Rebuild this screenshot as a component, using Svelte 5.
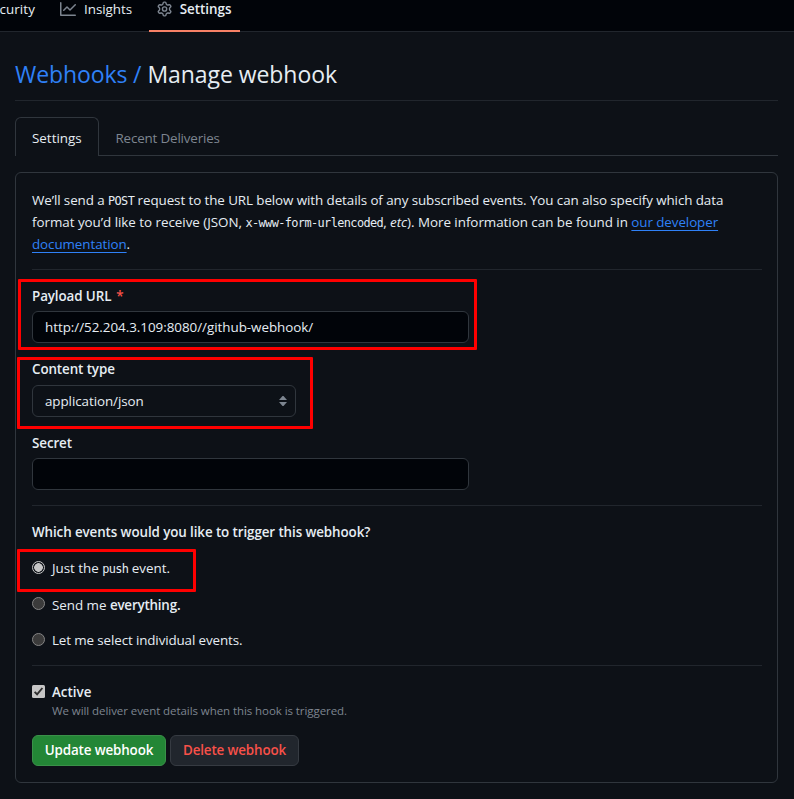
<script>
  const tabs = [
    { label: 'Settings', active: true },
    { label: 'Recent Deliveries', active: false }
  ];
  let selected = $state('push');
  let url = $state('http://52.204.3.109:8080//github-webhook/');
</script>

<div class="page">
  <nav class="repo-nav">
    <span class="nav-item security">Security</span>
    <span class="nav-item insights">
      <svg width="16" height="16" viewBox="0 0 16 16" fill="#7d8590"><path d="M1.5 1.75V13.5h13.75a.75.75 0 0 1 0 1.5H.75a.75.75 0 0 1-.75-.75V1.75a.75.75 0 0 1 1.5 0Zm14.28 2.53-5.25 5.25a.75.75 0 0 1-1.06 0L7 7.06 4.28 9.78a.751.751 0 0 1-1.042-.018.751.751 0 0 1-.018-1.042l3.25-3.25a.75.75 0 0 1 1.06 0L10 7.94l4.72-4.72a.751.751 0 0 1 1.042.018.751.751 0 0 1 .018 1.042Z"/></svg>
      <span class="w-insights">Insights</span>
    </span>
    <span class="nav-item current">
      <svg width="16" height="16" viewBox="0 0 16 16" fill="#7d8590"><path d="M8 0a8.2 8.2 0 0 1 .701.031C9.444.095 9.99.645 10.16 1.29l.288 1.107c.018.066.079.158.212.224.231.114.454.243.668.386.123.082.233.09.299.071l1.103-.303c.644-.176 1.392.021 1.82.63.27.385.506.792.704 1.218.315.675.111 1.422-.364 1.891l-.814.806c-.049.048-.098.147-.088.294.016.257.016.515 0 .772-.01.147.038.246.088.294l.814.806c.475.469.679 1.216.364 1.891a7.977 7.977 0 0 1-.704 1.217c-.428.61-1.176.807-1.82.63l-1.102-.302c-.067-.019-.177-.011-.3.071a5.909 5.909 0 0 1-.668.386c-.133.066-.194.158-.211.224l-.29 1.106c-.168.646-.715 1.196-1.458 1.26a8.006 8.006 0 0 1-1.402 0c-.743-.064-1.289-.614-1.458-1.26l-.289-1.106c-.018-.066-.079-.158-.212-.224a5.738 5.738 0 0 1-.668-.386c-.123-.082-.233-.09-.299-.071l-1.103.303c-.644.176-1.392-.021-1.82-.63a8.12 8.12 0 0 1-.704-1.218c-.315-.675-.111-1.422.363-1.891l.815-.806c.05-.048.098-.147.088-.294a6.214 6.214 0 0 1 0-.772c.01-.147-.038-.246-.088-.294l-.815-.806C.635 6.045.431 5.298.746 4.623a7.92 7.92 0 0 1 .704-1.217c.428-.61 1.176-.807 1.82-.63l1.102.302c.067.019.177.011.3-.071.214-.143.437-.272.668-.386.133-.066.194-.158.211-.224l.29-1.106C6.009.645 6.556.095 7.299.03 7.53.01 7.764 0 8 0Zm-.571 1.525c-.036.003-.108.036-.137.146l-.289 1.105c-.147.561-.549.967-.998 1.189-.173.086-.34.183-.5.29-.417.278-.97.423-1.529.27l-1.103-.303c-.109-.03-.175.016-.195.045-.22.312-.412.644-.573.99-.014.031-.021.11.059.19l.815.806c.411.406.562.957.53 1.456a4.709 4.709 0 0 0 0 .582c.032.499-.119 1.05-.53 1.456l-.815.806c-.081.08-.073.159-.059.19.162.346.353.677.573.989.02.03.085.076.195.046l1.102-.303c.56-.153 1.113-.008 1.53.27.161.107.328.204.501.29.447.222.85.629.997 1.189l.289 1.105c.029.109.101.143.137.146a6.6 6.6 0 0 0 1.142 0c.036-.003.108-.036.137-.146l.289-1.105c.147-.561.549-.967.998-1.189.173-.086.34-.183.5-.29.417-.278.97-.423 1.529-.27l1.103.303c.109.029.175-.016.195-.045.22-.313.411-.644.573-.99.014-.031.021-.11-.059-.19l-.815-.806c-.411-.406-.562-.957-.53-1.456a4.709 4.709 0 0 0 0-.582c-.032-.499.119-1.05.53-1.456l.815-.806c.081-.08.073-.159.059-.19a6.464 6.464 0 0 0-.573-.989c-.02-.03-.085-.076-.195-.046l-1.102.303c-.56.153-1.113.008-1.53-.27a4.44 4.44 0 0 0-.501-.29c-.447-.222-.85-.629-.997-1.189l-.289-1.105c-.029-.11-.101-.143-.137-.146a6.6 6.6 0 0 0-1.142 0ZM11 8a3 3 0 1 1-6 0 3 3 0 0 1 6 0ZM9.5 8a1.5 1.5 0 1 0-3.001.001A1.5 1.5 0 0 0 9.5 8Z"/></svg>
      <b class="w-settings">Settings</b>
    </span>
  </nav>

  <main>
    <h1><a href="#hooks">Webhooks /</a> <span class="manage">Manage webhook</span></h1>

    <div class="tabs">
      {#each tabs as tab}
        <span class="tab" class:active={tab.active}>{tab.label}</span>
      {/each}
    </div>

    <section class="panel">
      <p class="intro">
        <span class="line l1">We’ll send a <code>POST</code> request to the URL below with details of any subscribed events. You can also specify which data</span>
        <span class="line l2">format you’d like to receive (JSON, <code>x-www-form-urlencoded</code>, <em>etc</em>). More information can be found in <a href="#docs">our developer</a></span>
        <span class="line l3"><a href="#docs">documentation</a>.</span>
      </p>
      <hr />

      <div class="field payload">
        <i class="mark"></i>
        <label for="url"><span>Payload URL</span><span class="star">*</span></label>
        <input id="url" class="text url" bind:value={url} />
      </div>
      <div class="field ctype">
        <i class="mark"></i>
        <span class="label">Content type</span>
        <div class="select">
          <span>application/json</span>
          <svg width="8" height="10" viewBox="0 0 8 10" fill="#7d8590"><path d="M0 4h8L4.5 0h-1zM0 6h8L4.5 10h-1z"/></svg>
        </div>
      </div>
      <div class="field secret">
        <label for="secret">Secret</label>
        <input id="secret" class="text" />
      </div>
      <hr />

      <div class="question"><b>Which events would you like to trigger this webhook?</b></div>
      <div class="choice push">
        <i class="mark"></i>
        <button class="radio" class:on={selected === 'push'} aria-label="push" onclick={() => (selected = 'push')}></button>
        <span>Just the <code>push</code> event.</span>
      </div>
      <div class="choice all">
        <button class="radio" class:on={selected === 'all'} aria-label="everything" onclick={() => (selected = 'all')}></button>
        <span>Send me <b>everything.</b></span>
      </div>
      <div class="choice some">
        <button class="radio" class:on={selected === 'some'} aria-label="individual" onclick={() => (selected = 'some')}></button>
        <span>Let me select individual events.</span>
      </div>
      <hr />

      <div class="active-row">
        <svg width="13" height="13" viewBox="0 0 13 13"><rect width="13" height="13" rx="1.5" fill="#c6c6c6" /><path d="M2.6 6.9 5.1 9.3 10.4 3" fill="none" stroke="#2f2f2f" stroke-width="1.9" /></svg>
        <b>Active</b>
      </div>
      <div class="note"><span>We will deliver event details when this hook is triggered.</span></div>
      <div class="actions">
        <button class="btn primary"><span>Update webhook</span></button>
        <button class="btn danger"><span>Delete webhook</span></button>
      </div>
    </section>
  </main>
</div>

<style>
  :global(body) { margin: 0; background: #0d1117; }
  * { box-sizing: border-box; }
  .page {
    width: 794px; height: 799px; overflow: hidden;
    background: #0d1117; color: #e6edf3;
    font: 13.4px/22px "Open Sans", "Noto Sans", sans-serif;
    letter-spacing: -0.03px;
  }
  b, label, .label { font-weight: 600; letter-spacing: -0.1px; }
  code { font: 11.9px "DejaVu Sans Mono", monospace; letter-spacing: -0.6px; }
  a { color: #2f81f7; text-decoration: none; }
  .repo-nav {
    display: flex; height: 32px; background: #010409; border-bottom: 1px solid #21262d;
  }
  .nav-item { display: flex; height: 18px; align-items: center; gap: 8px; white-space: nowrap; }
  .security { width: 60px; margin-left: -17px; padding-right: 8px; justify-content: flex-end; letter-spacing: 0.1px; }
  .insights { width: 88.5px; margin-left: 17px; }
  .current { width: 91px; height: 32px; padding: 0 8px 14px; border-bottom: 2px solid #f78166; }
  .current b { margin-top: 2px; letter-spacing: 0; }
  .current svg { margin-top: 2px; }
  main { padding: 0 16px 0 15px; }
  h1 {
    height: 69px; margin: 0; padding-top: 25px; border-bottom: 1px solid #21262d;
    font-size: 23px; font-weight: 400; line-height: 34px; white-space: nowrap;
    letter-spacing: -0.06px;
  }
  h1 a { letter-spacing: -0.1px; }
  .tabs { display: flex; height: 39px; margin-top: 16px; border-bottom: 1px solid #30363d; }
  .tab { height: 38px; padding: 10px 16.5px; color: #7d8590; white-space: nowrap; letter-spacing: -0.17px; }
  .tab.active {
    width: 84px; height: 39px; color: #e6edf3; background: #0d1117; letter-spacing: 0;
    border: 1px solid #30363d; border-bottom: 0; border-radius: 6px 6px 0 0; padding: 9px 16px;
  }
  .panel { height: 611px; margin-top: 16px; padding: 16px 15px 0 16px; border: 1px solid #30363d; border-radius: 6px; }
  .intro { margin: 0; height: 80px; }
  .line { display: block; height: 22px; line-height: 22px; white-space: nowrap; }
  .l1 { letter-spacing: -0.087px; }
  .l2 a, .l3 { letter-spacing: -0.08px; }
  .line a { text-decoration: underline; text-underline-offset: 3px; text-decoration-thickness: 1px; text-decoration-skip-ink: none; }
  hr { height: 1px; margin: 0; border: 0; background: #21262d; }
  .field { position: relative; }
  .field label, .label { display: block; height: 22px; }
  .payload { margin-top: 15px; height: 73px; }
  .ctype { height: 74px; }
  .secret { height: 73px; }
  .star { color: #f85149; margin-left: 5px; }
  .text {
    display: block; width: 437px; height: 32px; margin-top: 4px; padding: 0 12px;
    color: #e6edf3; background: #010409; border: 1px solid #30363d; border-radius: 6px;
    font: inherit; letter-spacing: -0.03px; outline: none;
  }
  .select {
    display: flex; justify-content: space-between; align-items: center;
    width: 264px; height: 32px; margin-top: 5px; padding: 0 8px 0 12px;
    border: 1px solid #30363d; border-radius: 6px; letter-spacing: -0.07px;
  }
  .mark { position: absolute; border: 3px solid #f00; border-radius: 1px; pointer-events: none; }
  .payload .mark { left: -14px; top: -6px; width: 459px; height: 71px; }
  .ctype .mark { left: -15px; top: -1px; width: 296px; height: 72px; }
  .push .mark { left: -15px; top: -8px; width: 179px; height: 43px; }
  .question { margin-top: 15px; height: 36px; }
  .choice { position: relative; display: flex; height: 36px; gap: 7px; white-space: nowrap; }
  .some { letter-spacing: -0.12px; }
  .radio {
    width: 13px; height: 13px; margin: 4px 0 0; padding: 0;
    border: 1px solid #858585; border-radius: 50%; background: #3b3b3b;
  }
  .radio.on { border-color: #c6c6c6; background: radial-gradient(circle, #c6c6c6 0 4px, #0d1117 4.6px); }
  .all span { margin-top: 1px; }
  .all b { letter-spacing: -0.2px; }
  .active-row { display: flex; gap: 7px; margin-top: 15px; height: 22px; align-items: center; }
  .active-row svg { margin-top: -1px; }
  .active-row b { letter-spacing: 0; }
  .note { height: 32px; padding-left: 20px; color: #7d8590; font-size: 11.5px; line-height: 16px; white-space: nowrap; letter-spacing: -0.07px; }
  .actions { display: flex; gap: 4px; }
  .btn {
    height: 31px; padding: 0 0 1px; border-radius: 6px; font: 600 13.4px/20px "Open Sans", "Noto Sans", sans-serif;
    letter-spacing: -0.14px; white-space: nowrap;
  }
  .primary { width: 134px; color: #fff; background: #238636; border: 1px solid #3a9149; }
  .danger { width: 129px; color: #f85149; background: #21262d; border: 1px solid #363b42; }
</style>
